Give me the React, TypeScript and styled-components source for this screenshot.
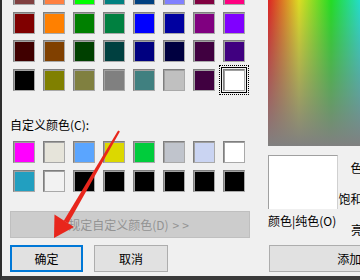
import { createGlobalStyle, css, styled } from 'styled-components'

const GlobalStyle = createGlobalStyle`
  html, body {
    margin: 0;
    padding: 0;
    background: #f0f0f0;
  }
  body {
    font-family: "Noto Sans CJK SC", "Noto Sans", sans-serif;
    font-size: 12px;
    color: #000;
  }
`

const basicColors = [
  ['#804040', '#ff8040', '#00ff00', '#008080', '#004080', '#8080ff', '#800040', '#ff0080'],
  ['#800000', '#ff8000', '#008000', '#008040', '#0000ff', '#0000a0', '#800080', '#8000ff'],
  ['#400000', '#804000', '#004000', '#004040', '#000080', '#000040', '#400040', '#400080'],
  ['#000000', '#808000', '#808040', '#808080', '#408080', '#c0c0c0', '#400040', '#ffffff'],
]

const customColors = [
  '#ff00ff', '#e6e4da', '#5aa5ff', '#dcd800', '#00cc3c', '#c0c4cc', '#cad4f2', '#ffffff',
  '#229fc0', '#f2f2f2', '#000000', '#000000', '#000000', '#000000', '#000000', '#000000',
]

const Window = styled.div`
  position: relative;
  display: flex;
  width: 360px;
  height: 280px;
  box-sizing: border-box;
  overflow: hidden;
  background: #f0f0f0;
  border-left: 2px solid #2e2e2e;
  border-bottom: 4px solid #3a3a3a;
`

const LeftPanel = styled.div`
  display: flex;
  flex-direction: column;
  flex-shrink: 0;
  width: 250px;
  padding-left: 8px;
`

const RightPanel = styled.div`
  display: flex;
  flex-direction: column;
  flex-shrink: 0;
  width: 260px;
  margin-left: 8px;
`

const SwatchGrid = styled.div<{ $rowGap: number }>`
  display: grid;
  grid-template-columns: repeat(8, 22px);
  grid-auto-rows: 22px;
  column-gap: 8px;
  row-gap: ${(p) => p.$rowGap}px;
  padding-left: 3px;
`

const BasicGrid = styled(SwatchGrid)`
  margin-top: -17px;
`

const CustomGrid = styled(SwatchGrid)`
  margin-top: 8px;
`

const Swatch = styled.div<{ $color: string; $selected?: boolean }>`
  box-sizing: border-box;
  width: 22px;
  height: 22px;
  background: ${(p) => p.$color};
  border: 1px solid;
  border-color: #7f7f7f #a9a9a9 #a9a9a9 #7f7f7f;
  box-shadow: inset 1px 1px 0 #a0a0a0;
  ${(p) =>
    p.$selected &&
    css`
      box-shadow: inset 1px 1px 0 #a0a0a0, 0 0 0 1px #f0f0f0, 0 0 0 2px #000;
      outline: 1px dotted #000;
      outline-offset: 3px;
    `}
`

const SectionLabel = styled.div`
  margin-top: 26px;
  line-height: 16px;
  height: 16px;
  white-space: nowrap;
`

const DialogButton = styled.button<{ $default?: boolean }>`
  box-sizing: border-box;
  height: 27px;
  padding: 0;
  font-family: inherit;
  font-size: 12px;
  color: #000;
  background: #e1e1e1;
  border: ${(p) => (p.$default ? '2px solid #0078d7' : '1px solid #adadad')};
  white-space: nowrap;
`

const DefineButton = styled(DialogButton)`
  width: 240px;
  margin-top: 19px;
  background: #cccccc;
  border-color: #bfbfbf;
  color: #939393;
`

const Chevrons = styled.span`
  letter-spacing: 3px;
  margin-left: 4px;
`

const ButtonRow = styled.div`
  display: flex;
  gap: 11px;
  margin-top: 7px;
`

const Spectrum = styled.div`
  height: 146px;
  width: 100%;
  background:
    linear-gradient(to bottom, rgba(128, 128, 128, 0.28), #808080),
    linear-gradient(
      to right,
      #ff0000 0px,
      #ffff00 31px,
      #00ff00 63px,
      #00ffff 95px,
      #0000ff 127px,
      #ff00ff 159px,
      #ff0000 190px
    );
`

const PreviewRow = styled.div`
  display: flex;
  margin-top: 9px;
`

const PreviewColumn = styled.div`
  display: flex;
  flex-direction: column;
  width: 70px;
`

const PreviewBox = styled.div`
  box-sizing: border-box;
  width: 70px;
  height: 54px;
  background: #fff;
  border-top: 1px solid #a0a0a0;
  border-left: 1px solid #a0a0a0;
  border-right: 1px solid #d0d0d0;
`

const PreviewCaption = styled.div`
  margin-top: 4px;
  line-height: 16px;
  white-space: nowrap;
`

const FieldLabels = styled.div`
  display: flex;
  flex-direction: column;
  align-items: flex-end;
  gap: 15px;
  width: 54px;
  margin-left: 1px;
  padding-top: 5px;
`

const FieldLabel = styled.div`
  line-height: 16px;
  white-space: nowrap;
`

const AddButton = styled(DialogButton)`
  width: 248px;
  margin-top: 7px;
  margin-left: 1px;
`

const ArrowLayer = styled.svg`
  position: absolute;
  left: -2px;
  top: 0;
  pointer-events: none;
`

function App() {
  return (
    <>
      <GlobalStyle />
      <Window>
        <LeftPanel>
          <BasicGrid $rowGap={6.7}>
            {basicColors.flatMap((row, r) =>
              row.map((color, c) => (
                <Swatch
                  key={`${r}-${c}`}
                  $color={color}
                  $selected={r === 3 && c === 7}
                />
              ))
            )}
          </BasicGrid>
          <SectionLabel>自定义颜色(C):</SectionLabel>
          <CustomGrid $rowGap={7}>
            {customColors.map((color, i) => (
              <Swatch key={i} $color={color} />
            ))}
          </CustomGrid>
          <DefineButton disabled>
            规定自定义颜色(D)<Chevrons>&gt;&gt;</Chevrons>
          </DefineButton>
          <ButtonRow>
            <DialogButton $default style={{ width: 73 }}>
              确定
            </DialogButton>
            <DialogButton style={{ width: 74 }}>取消</DialogButton>
          </ButtonRow>
        </LeftPanel>
        <RightPanel>
          <Spectrum />
          <PreviewRow>
            <PreviewColumn>
              <PreviewBox />
              <PreviewCaption>颜色|纯色(O)</PreviewCaption>
            </PreviewColumn>
            <FieldLabels>
              <FieldLabel>色调(E):</FieldLabel>
              <FieldLabel>饱和度(S):</FieldLabel>
              <FieldLabel>亮度(L):</FieldLabel>
            </FieldLabels>
          </PreviewRow>
          <AddButton>添加到自定义颜色(A)</AddButton>
        </RightPanel>
        <ArrowLayer width="360" height="280" viewBox="0 0 360 280">
          <polygon
            points="119.9,131.5 118.1,130.5 63.8,220.8 68.2,223.2"
            fill="#e8261c"
          />
          <polygon points="54,238 54.5,214.5 74,227" fill="#e8261c" />
        </ArrowLayer>
      </Window>
    </>
  )
}

export default App
